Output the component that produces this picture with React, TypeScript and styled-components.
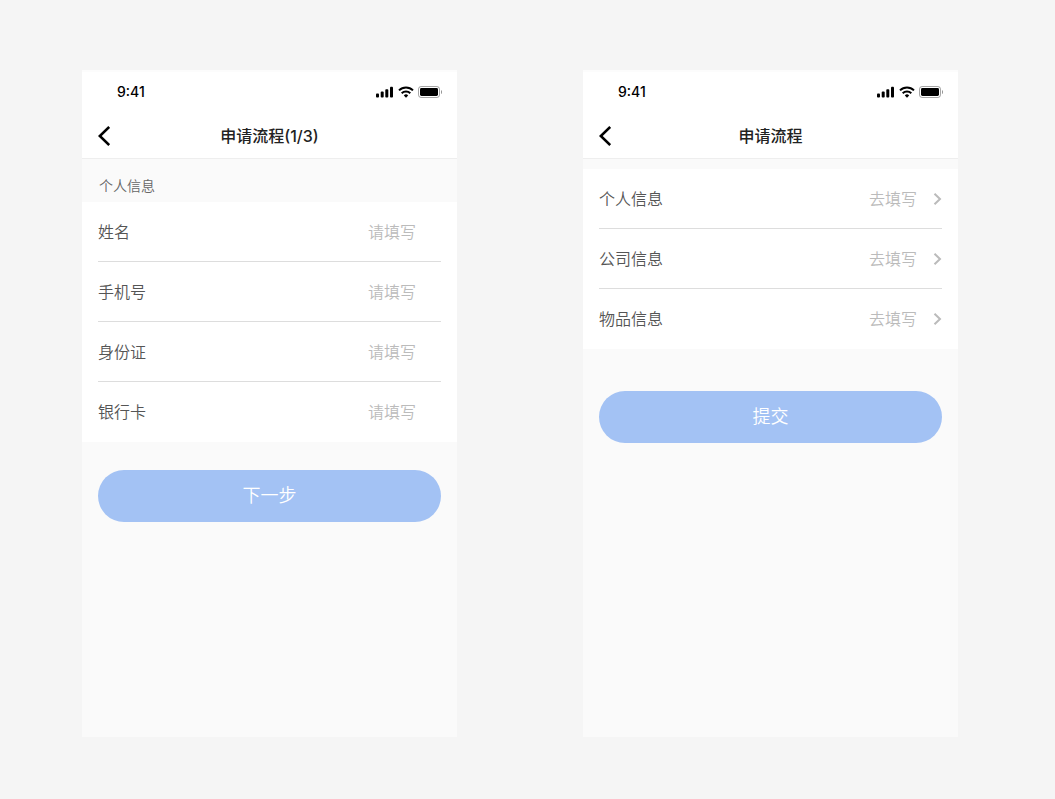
import React from "react";
import styled, { createGlobalStyle } from "styled-components";

const GlobalStyle = createGlobalStyle`
  *, *::before, *::after { box-sizing: border-box; }
  body {
    margin: 0;
    background: #f5f5f5;
    font-family: Inter, "Noto Sans CJK SC", sans-serif;
    font-size: 16px;
    color: #555;
  }
`;

const Board = styled.main`
  display: grid;
  grid-template-columns: 1fr 1fr;
  gap: 126px;
  min-height: 100vh;
  padding: 70px 97px 62px 82px;
`;

const Phone = styled.section`
  display: flex;
  flex-direction: column;
  background: #fafafa;
`;

const StatusBar = styled.div`
  display: flex;
  align-items: center;
  justify-content: space-between;
  height: 44px;
  padding: 0 15px 2px 35px;
  border-top: 2px solid #fcfcfc;
  background: #fff;
`;

const Clock = styled.time`
  font-size: 14px;
  line-height: 20px;
  font-weight: 500;
  color: #000;
`;

const StatusIcons = styled.div`
  display: flex;
  align-items: center;
  gap: 4px;
`;

const NavBar = styled.header`
  display: grid;
  grid-template-columns: 44px 1fr 44px;
  align-items: center;
  height: 45px;
  background: #fff;
  border-bottom: 1px solid #eee;
`;

const BackButton = styled.button`
  display: flex;
  align-items: center;
  height: 44px;
  padding: 0 0 0 16px;
  border: 0;
  background: none;
  cursor: pointer;
`;

const Title = styled.h1`
  margin: 0;
  font-size: 16px;
  line-height: 24px;
  font-weight: 500;
  text-align: center;
  color: #222;
`;

const GroupTitle = styled.h2`
  margin: 0;
  padding: 17px 17px 6px;
  font-size: 14px;
  line-height: 20px;
  font-weight: 350;
  color: #666;
`;

const List = styled.div<{ $spaced?: boolean }>`
  margin-top: ${(p) => (p.$spaced ? 10 : 0)}px;
  padding: 0 16px;
  background: #fff;
`;

const Row = styled.div`
  display: flex;
  align-items: center;
  height: 60px;
  padding-top: 1px;
  border-bottom: 1px solid #ddd;
  font-weight: 350;
  line-height: 24px;
  color: #555;

  &:last-child {
    border-bottom-color: transparent;
  }
`;

const FieldLabel = styled.label`
  flex: none;
`;

const FieldInput = styled.input`
  flex: 1;
  min-width: 0;
  height: 40px;
  padding: 0 25px 0 16px;
  border: 0;
  background: none;
  font: inherit;
  text-align: right;
  color: inherit;

  &::placeholder {
    color: #bbb;
    opacity: 1;
  }
`;

const RowLink = styled(Row).attrs({ as: "a" })<{ href: string }>`
  justify-content: space-between;
  text-decoration: none;
`;

const RowValue = styled.span`
  display: flex;
  align-items: center;
  gap: 16px;
  color: #bbb;
`;

const SubmitButton = styled.button<{ $gap: number }>`
  height: 52px;
  margin: ${(p) => p.$gap}px 16px 0;
  padding: 0;
  border: 0;
  border-radius: 26px;
  background: #a3c2f4;
  font: inherit;
  font-size: 18px;
  font-weight: 350;
  line-height: 26px;
  color: #fff;
  cursor: pointer;
`;

function Status() {
  return (
    <StatusBar>
      <Clock>9:41</Clock>
      <StatusIcons>
        <svg width="18" height="12" viewBox="0 0 18 12" aria-hidden="true">
          <rect x="0" y="7.5" width="3" height="4" rx="0.9" />
          <rect x="4.7" y="5.6" width="3" height="5.9" rx="0.9" />
          <rect x="9.3" y="3.2" width="3" height="8.3" rx="0.9" />
          <rect x="14" y="0.8" width="3" height="10.7" rx="0.9" />
        </svg>
        <svg width="16" height="12" viewBox="0 0 16 12" fill="none" stroke="#000" strokeWidth="2" aria-hidden="true">
          <path d="M1 4.4a10 10 0 0 1 14 0" />
          <path d="M3.7 7.2a6.1 6.1 0 0 1 8.6 0" />
          <path d="M5.8 9.4a3.1 3.1 0 0 1 4.4 0L8 11.7z" fill="#000" stroke="none" />
        </svg>
        <svg width="24" height="12" viewBox="0 0 24 12" aria-hidden="true">
          <rect x="0.5" y="0.5" width="21" height="11" rx="2.6" fill="none" stroke="#000" strokeOpacity="0.35" />
          <rect x="2" y="2" width="18" height="8" rx="1.4" />
          <path d="M23 4v4c.7-.3 1.2-1.100 1.200-2S23.700 4.300 23 4z" fillOpacity="0.4" />
        </svg>
      </StatusIcons>
    </StatusBar>
  );
}

function Nav({ title }: { title: string }) {
  return (
    <NavBar>
      <BackButton type="button" aria-label="返回">
        <svg width="12" height="20" viewBox="0 0 12 20" fill="none" stroke="#000" strokeWidth="2.6">
          <path d="M11.200 1 1.800 10l9.400 9" />
        </svg>
      </BackButton>
      <Title>{title}</Title>
    </NavBar>
  );
}

const fields = [
  { id: "name", label: "姓名" },
  { id: "phone", label: "手机号" },
  { id: "identity", label: "身份证" },
  { id: "card", label: "银行卡" },
];

const steps = [
  { id: "personal", label: "个人信息" },
  { id: "company", label: "公司信息" },
  { id: "goods", label: "物品信息" },
];

export default function App() {
  return (
    <>
      <GlobalStyle />
      <Board>
        <Phone>
          <Status />
          <Nav title="申请流程(1/3)" />
          <GroupTitle>个人信息</GroupTitle>
          <List>
            {fields.map((f) => (
              <Row key={f.id}>
                <FieldLabel htmlFor={f.id}>{f.label}</FieldLabel>
                <FieldInput id={f.id} placeholder="请填写" />
              </Row>
            ))}
          </List>
          <SubmitButton type="button" $gap={28}>下一步</SubmitButton>
        </Phone>
        <Phone>
          <Status />
          <Nav title="申请流程" />
          <List $spaced>
            {steps.map((s) => (
              <RowLink key={s.id} href={`#${s.id}`}>
                {s.label}
                <RowValue>
                  去填写
                  <svg width="9" height="12" viewBox="0 0 9 12" fill="none" stroke="#bbb" strokeWidth="2" aria-hidden="true">
                    <path d="M1.500 0.700 7 6l-5.500 5.300" />
                  </svg>
                </RowValue>
              </RowLink>
            ))}
          </List>
          <SubmitButton type="button" $gap={42}>提交</SubmitButton>
        </Phone>
      </Board>
    </>
  );
}
